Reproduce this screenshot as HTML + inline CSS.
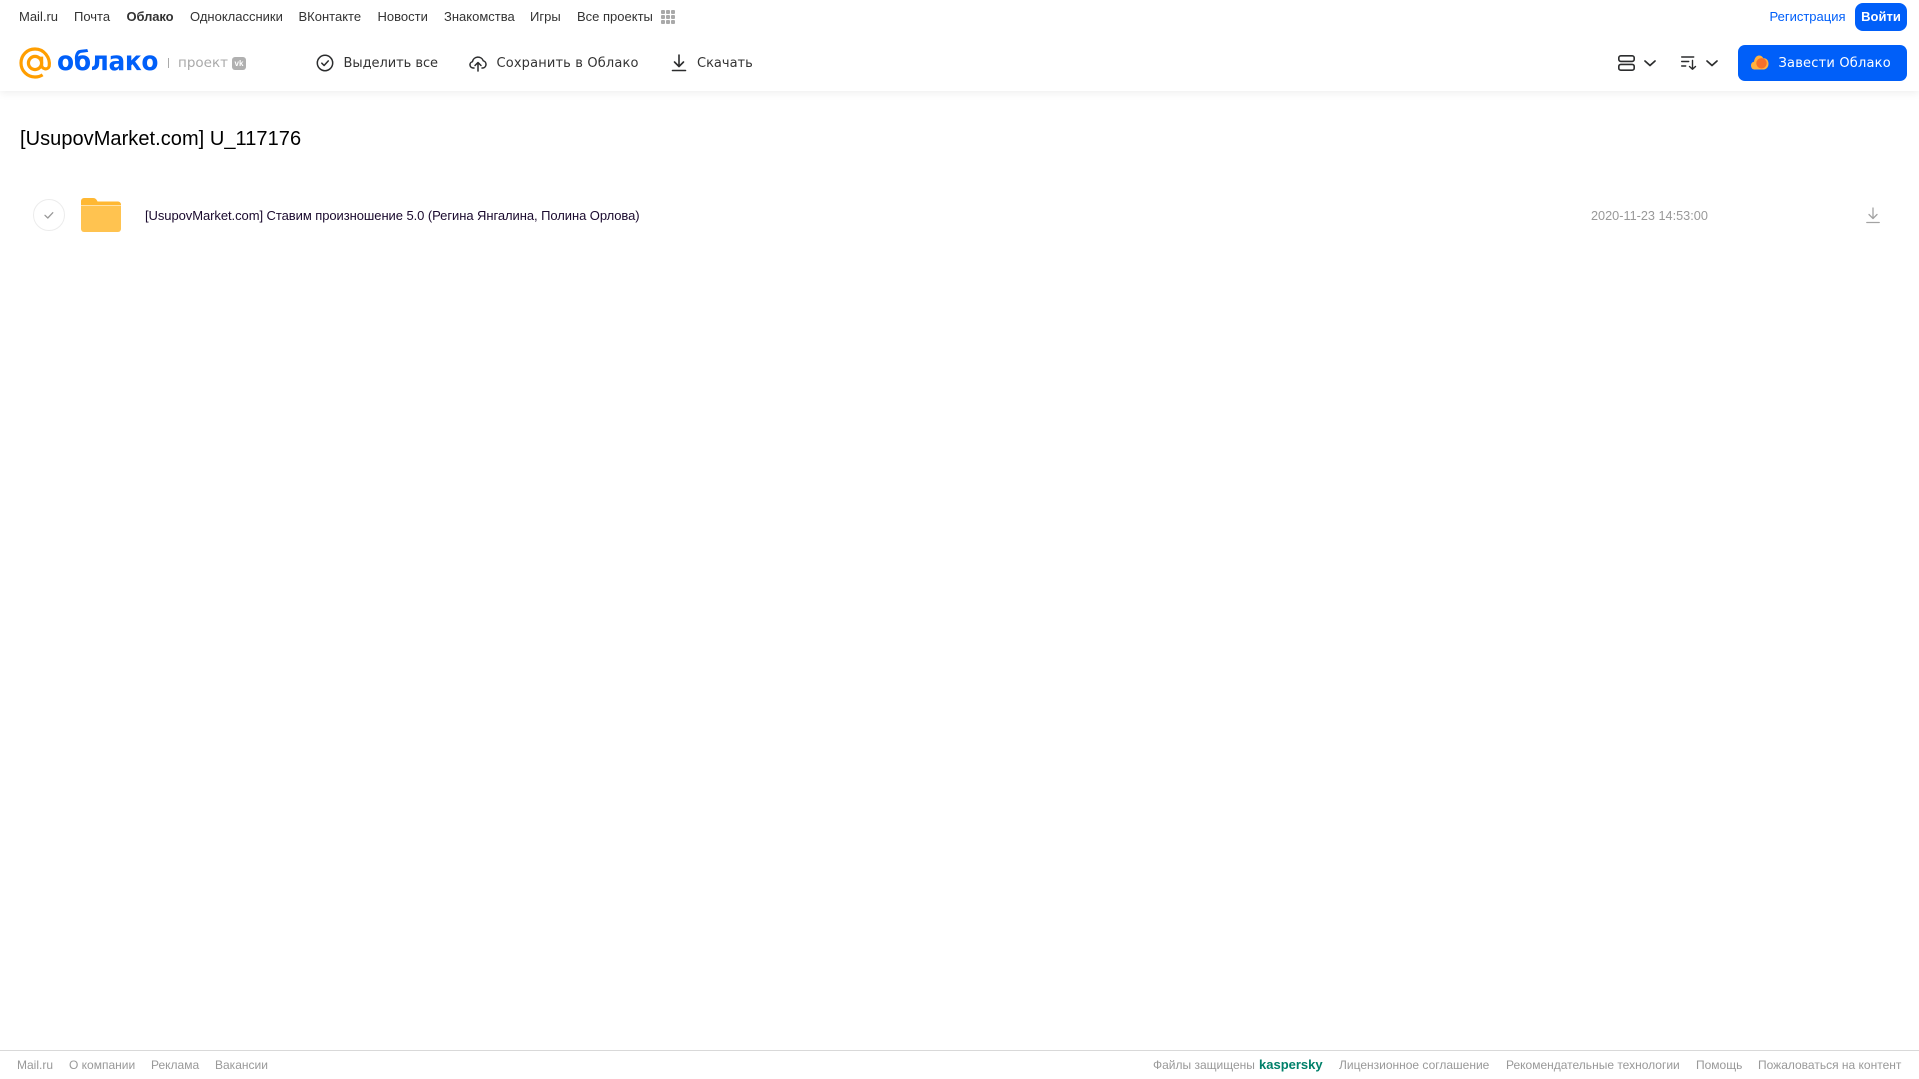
<!DOCTYPE html>
<html lang="ru"><head><meta charset="utf-8"><title>Облако</title>
<style>
html,body{margin:0;padding:0;width:1919px;height:1079px;overflow:hidden;background:#fff;font-family:"Liberation Sans",Arial,sans-serif}
.t{position:absolute;white-space:nowrap;line-height:16px;height:16px}
.n{top:9px;font-size:13px;color:#333}
.h{top:56px;color:#333;font-family:"DejaVu Sans","Liberation Sans",sans-serif;font-size:13px;letter-spacing:.1px}
.f{top:1057px;font-size:12px;color:#999}
svg{position:absolute;overflow:visible}
</style></head><body>
<div style="position:absolute;left:0;top:0;width:1919px;height:91px;background:#fff;box-shadow:0 2px 8px rgba(0,0,0,.07)"></div>
<span class="t n" style="left:19px">Mail.ru</span>
<span class="t n" style="left:74px">Почта</span>
<span class="t n" style="left:126.500px;font-weight:bold;letter-spacing:-.1px">Облако</span>
<span class="t n" style="left:190px">Одноклассники</span>
<span class="t n" style="left:298.500px">ВКонтакте</span>
<span class="t n" style="left:377.500px">Новости</span>
<span class="t n" style="left:444px">Знакомства</span>
<span class="t n" style="left:530px">Игры</span>
<span class="t n" style="left:577px">Все проекты</span>
<svg style="left:661px;top:10px" width="14" height="14" fill="#a9a9a9"><rect width="4" height="4" rx="1"/><rect x="5" width="4" height="4" rx="1"/><rect x="10" width="4" height="4" rx="1"/><rect y="5" width="4" height="4" rx="1"/><rect x="5" y="5" width="4" height="4" rx="1"/><rect x="10" y="5" width="4" height="4" rx="1"/><rect y="10" width="4" height="4" rx="1"/><rect x="5" y="10" width="4" height="4" rx="1"/><rect x="10" y="10" width="4" height="4" rx="1"/></svg>
<span class="t n" style="left:1769.500px;color:#005ff9">Регистрация</span>
<div style="position:absolute;left:1855px;top:3px;width:52px;height:28px;border-radius:8px;background:#005ff9;color:#fff;font-size:13px;font-weight:bold;line-height:27px;text-align:center">Войти</div>

<svg style="left:19px;top:47px" width="32" height="32" viewBox="0 0 32 32" fill="none" stroke="#ff9e00" stroke-width="3.2"><circle cx="16" cy="16" r="6.600"/><path d="M22.600 9.600V18a3.900 3.900 0 0 0 7.600 1.200C31.500 10.500 25 2 16 2 8 2 2 8.200 2 16s6.200 14 14 14c3 0 5.500-.8 7.600-2.200"/></svg>
<span class="t" style="left:57px;top:44px;height:36px;line-height:36px;font-size:27px;font-weight:bold;color:#005ff9;font-family:'DejaVu Sans',sans-serif;letter-spacing:-.4px;transform-origin:0 50%;transform:scaleX(.92)">облако</span>
<div style="position:absolute;left:168px;top:58px;width:1px;height:10px;background:#aaa"></div>
<span class="t" style="left:178px;top:55px;font-size:13.500px;color:#a9a9a9;font-family:'DejaVu Sans',sans-serif">проект</span>
<div style="position:absolute;left:232px;top:57px;width:14px;height:13px;border-radius:3px;background:#b0b0b0;color:#fff;font-size:8px;font-weight:bold;line-height:13px;text-align:center">vk</div>

<svg style="left:316px;top:54px" width="18" height="18" viewBox="0 0 18 18" fill="none" stroke="#2c2d2e" stroke-width="1.500"><circle cx="9" cy="9" r="7.700"/><path d="M5.800 9.200l2.300 2.300 4.200-4.600" stroke-linecap="round" stroke-linejoin="round"/></svg>
<span class="t h" style="left:343.500px;letter-spacing:-.05px">Выделить все</span>
<svg style="left:469px;top:54px" width="18" height="18" viewBox="0 0 18 18" fill="none" stroke="#2c2d2e" stroke-width="1.500" stroke-linecap="round" stroke-linejoin="round"><path d="M5 14H4a3.200 3.200 0 0 1-.6-6.300A5.700 5.700 0 0 1 14.300 6.800 3.700 3.700 0 0 1 14 14h-1"/><path d="M9 17V9M6 11.500L9 8.500l3 3"/></svg>
<span class="t h" style="left:496.500px;letter-spacing:.15px">Сохранить в Облако</span>
<svg style="left:671px;top:54px" width="16" height="18" viewBox="0 0 16 18" fill="none" stroke="#2c2d2e" stroke-width="1.600" stroke-linecap="round" stroke-linejoin="round"><path d="M8 1v11M3.500 8L8 12.500 12.500 8M1.500 16.500h13"/></svg>
<span class="t h" style="left:697px;letter-spacing:0">Скачать</span>

<svg style="left:1618px;top:55px" width="17" height="16" viewBox="0 0 17 16" fill="none" stroke="#2c2d2e" stroke-width="1.600"><rect x=".8" y=".8" width="15.400" height="5.600" rx="2"/><rect x=".8" y="9.400" width="15.400" height="5.800" rx="2"/></svg>
<svg style="left:1644px;top:60px" width="12" height="7" fill="none" stroke="#2c2d2e" stroke-width="1.700" stroke-linecap="round" stroke-linejoin="round"><path d="M1 1l5 4.500L11 1"/></svg>
<svg style="left:1681px;top:56px" width="16" height="14" viewBox="0 0 16 14" fill="none" stroke="#2c2d2e" stroke-width="1.400" stroke-linecap="round" stroke-linejoin="round"><path d="M.7 1h12M.7 5.500h7M.7 10h4M11.500 4.500v8.500M8.500 10.500l3 2.800 3-2.800"/></svg>
<svg style="left:1706px;top:60px" width="12" height="7" fill="none" stroke="#2c2d2e" stroke-width="1.700" stroke-linecap="round" stroke-linejoin="round"><path d="M1 1l5 4.500L11 1"/></svg>
<div style="position:absolute;left:1738px;top:45px;width:169px;height:36px;border-radius:7px;background:#005ff9"></div>
<svg style="left:1750px;top:55px" width="19" height="15" viewBox="0 0 19 15"><path d="M1 10.500C1 8.500 2.300 7 4 6.800 4.500 3 6.500 .5 9 .5c2 0 3.500 1 4.300 2.800 3-.3 5.200 2 5.200 5.400 0 3.500-2.300 5.800-5.500 5.800H4.300C2.400 14.500 1 12.700 1 10.500z" fill="#ffb13d"/><circle cx="11.500" cy="8.300" r="5.200" fill="#f4702a"/></svg>
<span class="t h" style="left:1778.500px;color:#fff;letter-spacing:.2px">Завести Облако</span>

<span class="t" style="left:20px;top:127px;height:24px;line-height:24px;font-size:20px;color:#000;letter-spacing:.05px">[UsupovMarket.com] U_117176</span>

<svg style="left:33px;top:199px" width="32" height="32" fill="none"><circle cx="16" cy="16" r="15.500" stroke="#ececec"/><path d="M12 16.300l2.800 2.700 5-5.300" stroke="#999" stroke-width="1.300" stroke-linecap="round" stroke-linejoin="round"/></svg>
<svg style="left:81px;top:198px" width="40" height="34" viewBox="0 0 40 34"><path d="M0 3a3 3 0 0 1 3-3h9c2 0 3 .8 4 2.500L16.500 3.500H37a3 3 0 0 1 3 3V7H0z" fill="#ffb833"/><path d="M0 7.500h40V31a3 3 0 0 1-3 3H3a3 3 0 0 1-3-3z" fill="#ffc350"/></svg>
<span class="t" style="left:145px;top:208px;font-size:13px;color:#1a0a2e;letter-spacing:-.066px">[UsupovMarket.com] Ставим произношение 5.0 (Регина Янгалина, Полина Орлова)</span>
<span class="t" style="left:1591px;top:208px;font-size:12.700px;color:#999">2020-11-23 14:53:00</span>
<svg style="left:1866px;top:207px" width="14" height="17" viewBox="0 0 14 17" fill="none" stroke="#a3a3a3" stroke-width="1.300" stroke-linecap="round" stroke-linejoin="round"><path d="M7 1v10M3 7.500l4 4 4-4M.8 15.500h12.400"/></svg>

<div style="position:absolute;left:0;top:1050px;width:1919px;height:1px;background:#d9d9d9"></div>
<span class="t f" style="left:17px">Mail.ru</span>
<span class="t f" style="left:69px">О компании</span>
<span class="t f" style="left:151px">Реклама</span>
<span class="t f" style="left:215px">Вакансии</span>
<span class="t f" style="left:1153px">Файлы защищены</span>
<span class="t f" style="left:1259px;font-size:13px;font-weight:bold;color:#00806a">kaspersky</span>
<span class="t f" style="left:1339px">Лицензионное соглашение</span>
<span class="t f" style="left:1506px">Рекомендательные технологии</span>
<span class="t f" style="left:1696px">Помощь</span>
<span class="t f" style="left:1758px">Пожаловаться на контент</span>
</body></html>
